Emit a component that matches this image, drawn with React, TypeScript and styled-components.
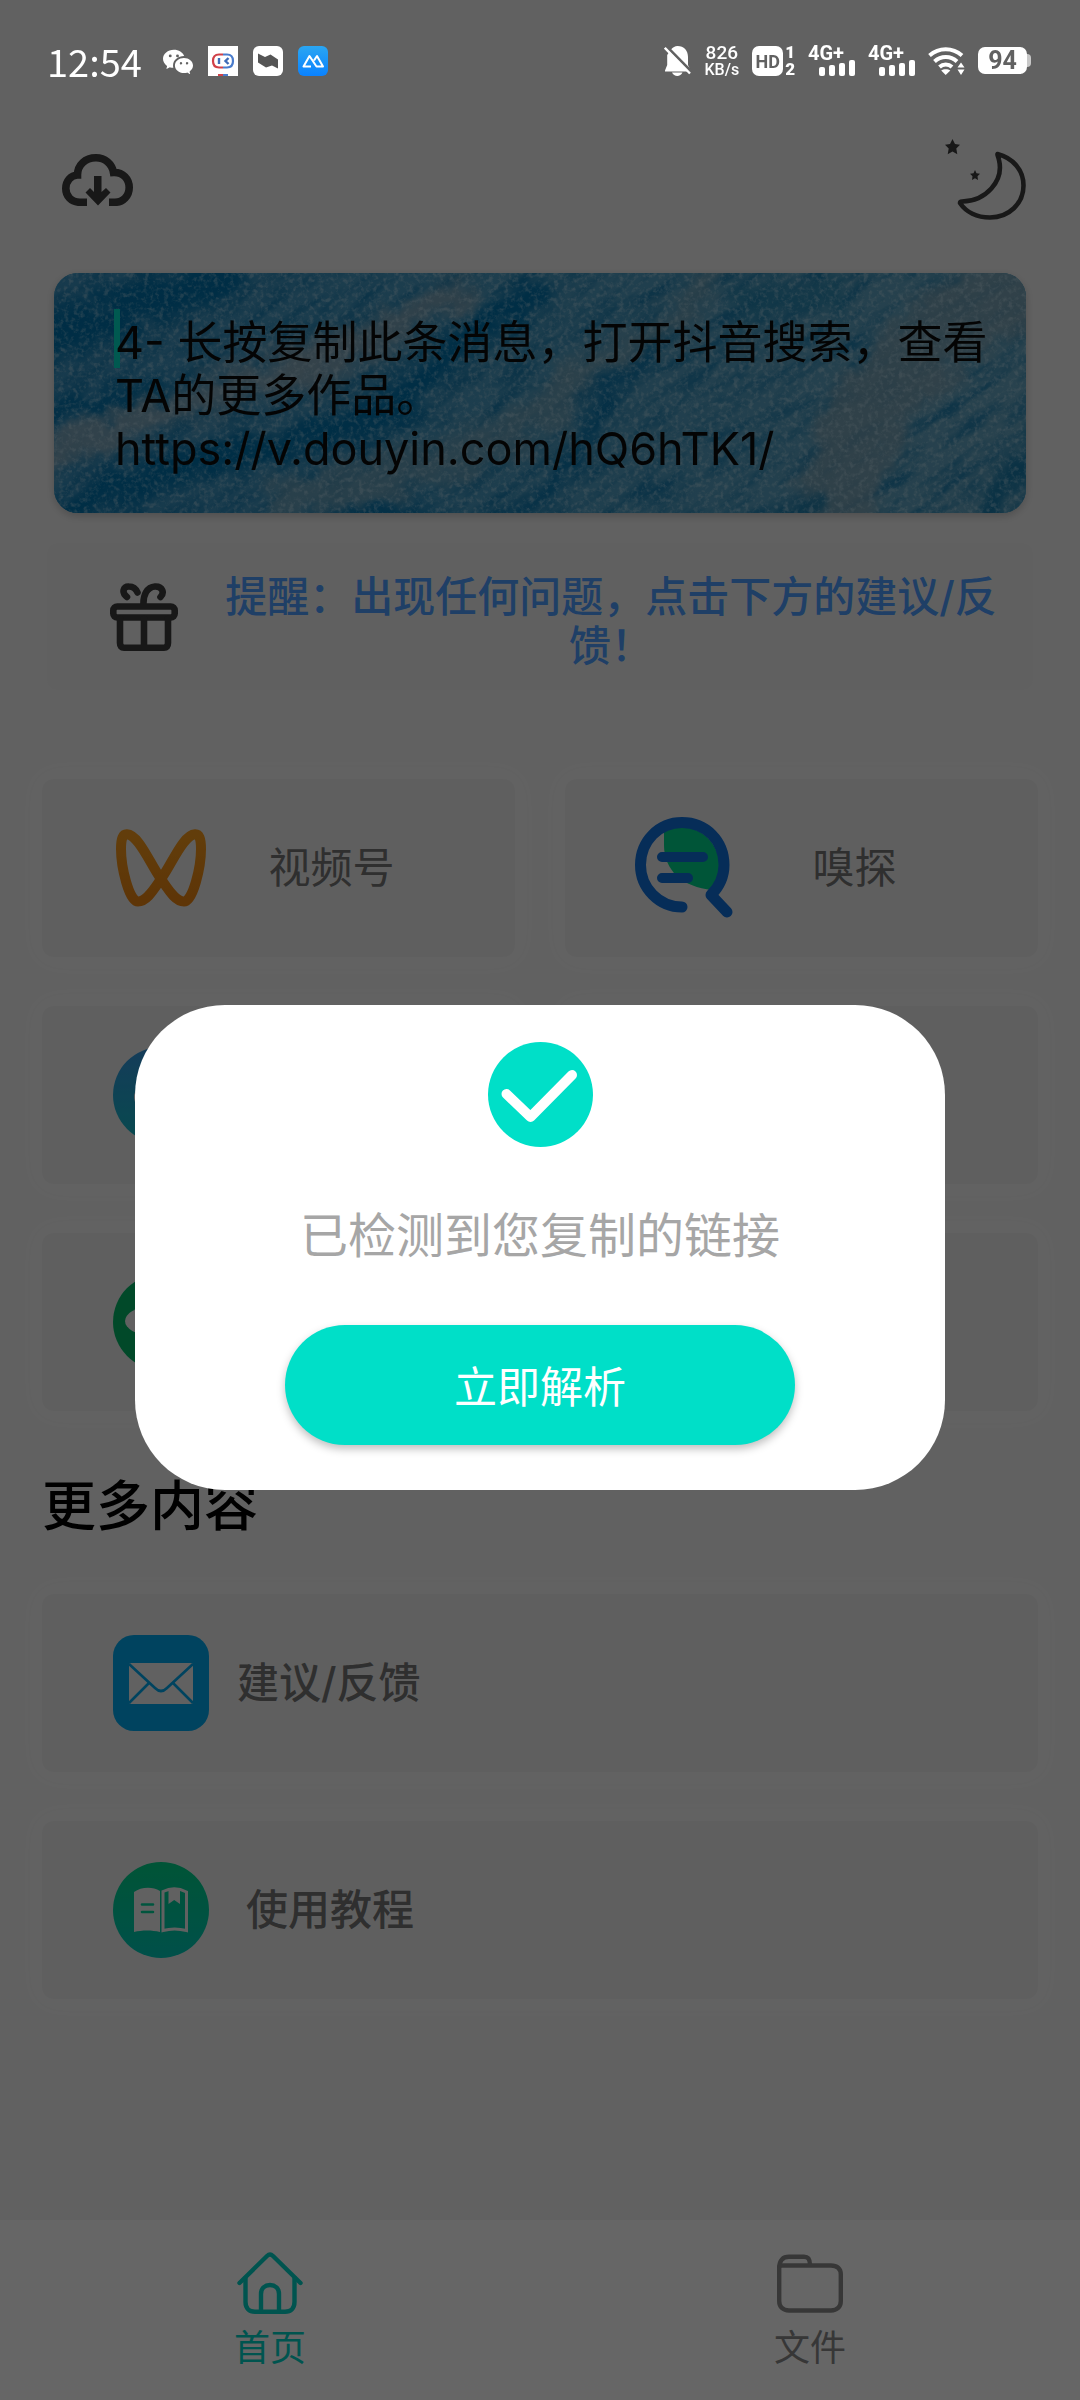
import React, { useState } from "react";
import styled, { createGlobalStyle } from "styled-components";
import { BsWechat } from "react-icons/bs";

const GlobalStyle = createGlobalStyle`
  *, *::before, *::after { box-sizing: border-box; }
  body {
    margin: 0;
    background: #f3f3f3;
    font-family: "Inter", "Noto Sans CJK SC", sans-serif;
  }
  button, textarea { font: inherit; color: inherit; }
  svg { display: block; flex: none; }
`;

const Screen = styled.div`
  display: flex;
  flex-direction: column;
  min-height: 100vh;
`;

/* ---------- status bar ---------- */

const StatusBar = styled.header`
  position: relative;
  z-index: 2;
  display: flex;
  align-items: center;
  justify-content: space-between;
  height: 94px;
  padding: 27px 49px 0 47px;
  color: #fff;
  font-family: "Roboto", sans-serif;
`;

const StatusGroup = styled.div<{ $gap: number }>`
  display: flex;
  align-items: center;
  gap: ${(p) => p.$gap}px;
`;

const Clock = styled.time`
  margin-right: 6px;
  font-family: "Noto Sans CJK SC", sans-serif;
  font-size: 38px;
  line-height: 40px;
`;

const Stack = styled.div`
  display: flex;
  flex-direction: column;
  align-items: center;
  font-weight: 500;
  line-height: 17px;
`;

const Small = styled.span<{ $size: number }>`
  font-size: ${(p) => p.$size}px;
`;

const HdGroup = styled.div`
  display: flex;
  align-items: center;
  gap: 2px;
  font-weight: 700;
`;

const HdBadge = styled.span`
  width: 31px;
  height: 30px;
  border-radius: 7px;
  background: #fff;
  color: #616161;
  font-size: 18px;
  line-height: 31px;
  text-align: center;
`;

const SimNumbers = styled(Stack)`
  font-size: 17px;
  font-weight: 900;
`;

const SignalBox = styled.div`
  display: flex;
  flex-direction: column;
  width: 47px;
  height: 30px;
`;

const SignalType = styled.span`
  height: 14px;
  font-size: 20px;
  font-weight: 700;
  line-height: 14px;
  white-space: nowrap;
`;

const SignalBars = styled.div`
  display: flex;
  align-items: flex-end;
  justify-content: flex-end;
  gap: 4px;
  height: 16px;
`;

const SignalBar = styled.i<{ $height: number }>`
  width: 6px;
  height: ${(p) => p.$height}px;
  border-radius: 2px;
  background: #fff;
`;

const Battery = styled.div`
  display: flex;
  align-items: center;
`;

const BatteryBody = styled.span`
  width: 49px;
  height: 27px;
  border-radius: 7px;
  background: #fff;
  color: #616161;
  font-size: 25px;
  font-weight: 700;
  line-height: 28px;
  text-align: center;
`;

const BatteryTip = styled.i`
  width: 4px;
  height: 13px;
  border-radius: 0 4px 4px 0;
  background: #c8c8c8;
`;

/* ---------- page ---------- */

const Toolbar = styled.div`
  display: flex;
  align-items: center;
  justify-content: space-between;
  padding: 45px 54px 53px 62px;
  color: #3c3c3c;
`;

const IconButton = styled.button`
  padding: 0;
  border: 0;
  background: none;
`;

const LinkCard = styled.section`
  position: relative;
  margin: 0 54px;
  overflow: hidden;
  border-radius: 24px;
  background: #3fa3cf;
  box-shadow: 0 3px 8px rgba(0, 0, 0, 0.2);
`;

const WaterArt = styled.svg`
  position: absolute;
  inset: 0;
  width: 100%;
  height: 100%;
`;

const LinkInput = styled.textarea`
  position: relative;
  display: block;
  width: 100%;
  height: 240px;
  padding: 43px 30px 38px 61px;
  overflow: hidden;
  border: 0;
  outline: 0;
  resize: none;
  background: none;
  color: #0c0c0c;
  font-size: 45px;
  line-height: 53px;
`;

const Caret = styled.i`
  position: absolute;
  left: 60px;
  top: 36px;
  width: 6px;
  height: 59px;
  background: #00dfc8;
`;

const Notice = styled.section`
  display: flex;
  align-items: center;
  gap: 40px;
  margin: 30px 47px 89px;
  min-height: 147px;
  padding: 0 29px 0 63px;
  border-radius: 10px;
  background: #f1f1f1;
  color: #3c3c3c;
`;

const NoticeText = styled.p`
  flex: 1;
  margin: 0;
  padding-top: 8px;
  color: #4f9eff;
  font-size: 42px;
  font-weight: 500;
  line-height: 49px;
  text-align: center;
`;

const CardGrid = styled.div<{ $columns: number }>`
  display: grid;
  grid-template-columns: repeat(${(p) => p.$columns}, 1fr);
  gap: 49px 50px;
  padding: 0 42px;
`;

const Card = styled.button`
  display: flex;
  align-items: center;
  height: 178px;
  padding: 0 66px;
  border: 0;
  border-radius: 12px;
  background: #eeeeee;
  box-shadow: 0 0 24px #f8f8f8;
  color: #757575;
  font-size: 42px;
  line-height: 56px;
`;

const CardIcon = styled.span`
  display: flex;
  flex: none;
  justify-content: center;
  width: 106px;
`;

const CardLabel = styled.span`
  flex: 1;
  text-align: center;
`;

const RowLabel = styled.span<{ $gap: number }>`
  padding-left: ${(p) => p.$gap}px;
  font-weight: 500;
`;

const SectionTitle = styled.h2`
  margin: 64px 42px 55px;
  color: #000;
  font-size: 54px;
  font-weight: 500;
  line-height: 64px;
`;

const TabBar = styled.nav`
  display: grid;
  grid-template-columns: 1fr 1fr;
  height: 180px;
  margin-top: auto;
  background: #fff;
`;

const Tab = styled.button<{ $active?: boolean }>`
  display: flex;
  flex-direction: column;
  align-items: center;
  gap: 10px;
  padding: 32px 0 0;
  border: 0;
  background: none;
  color: ${(p) => (p.$active ? "#00d2c6" : "#8a8a8a")};
  font-size: 36px;
  line-height: 48px;
`;

/* ---------- dialog ---------- */

const Scrim = styled.div`
  position: fixed;
  inset: 0;
  z-index: 1;
  display: flex;
  align-items: center;
  justify-content: center;
  padding-top: 94px;
  background: rgba(0, 0, 0, 0.6);
`;

const Dialog = styled.div`
  display: flex;
  flex-direction: column;
  align-items: center;
  width: 75%;
  padding: 37px 0 45px;
  border-radius: 90px;
  background: #fff;
`;

const DialogText = styled.p`
  margin: 61px 0;
  color: #a6a6a6;
  font-size: 48px;
  line-height: 56px;
`;

const PrimaryButton = styled.button`
  width: 510px;
  max-width: 90%;
  height: 120px;
  padding: 4px 0 0;
  border: 0;
  border-radius: 60px;
  background: #00dfc8;
  box-shadow: 0 4px 8px rgba(0, 0, 0, 0.25);
  color: #fff;
  font-size: 43px;
  line-height: 56px;
`;

/* ---------- drawings ---------- */

const Water = () => (
  <WaterArt viewBox="0 0 972 240" preserveAspectRatio="none" aria-hidden="true">
    <defs>
      <linearGradient id="sea" x1="0" y1="0" x2="1" y2="0">
        <stop offset="0" stopColor="#3b92c0" />
        <stop offset="0.5" stopColor="#4c9cc2" />
        <stop offset="1" stopColor="#66a6c2" />
      </linearGradient>
      <filter id="swirl" x="-10%" y="-20%" width="120%" height="140%" colorInterpolationFilters="sRGB">
        <feGaussianBlur stdDeviation="8" result="soft" />
        <feTurbulence type="fractalNoise" baseFrequency="0.03" numOctaves="4" seed="8" result="warp" />
        <feDisplacementMap in="soft" in2="warp" scale="40" xChannelSelector="R" yChannelSelector="G" />
      </filter>
      <filter id="foam" x="0" y="0" width="100%" height="100%" colorInterpolationFilters="sRGB">
        <feTurbulence type="fractalNoise" baseFrequency="0.2" numOctaves="3" seed="4" />
        <feColorMatrix values="0 0 0 0 0.8  0 0 0 0 0.9  0 0 0 0 0.95  3 1.4 0 0 -2.1" />
      </filter>
      <filter id="depth" x="0" y="0" width="100%" height="100%" colorInterpolationFilters="sRGB">
        <feTurbulence type="fractalNoise" baseFrequency="0.02 0.08" numOctaves="5" seed="21" />
        <feColorMatrix values="0 0 0 0 0  0 0 0 0 0.43  0 0 0 0 0.65  0 2.4 1 0 -1.5" />
      </filter>
    </defs>
    <rect width="972" height="240" fill="url(#sea)" />
    <g transform="rotate(-35 486 120)">
      <rect x="-100" y="-300" width="1172" height="840" filter="url(#depth)" opacity="0.6" />
    </g>
    <g filter="url(#swirl)" fill="none" strokeLinecap="round">
      <path d="M-20 190 C90 140 180 120 290 70" stroke="#93aebc" strokeWidth="30" opacity="0.8" />
      <path d="M240 110 C300 80 340 50 400 20" stroke="#8aa8b8" strokeWidth="34" opacity="0.8" />
      <path d="M230 230 C330 200 440 190 510 120" stroke="#7fa6b8" strokeWidth="40" opacity="0.6" />
      <path d="M660 0 C620 60 560 80 520 100" stroke="#86a8b6" strokeWidth="26" opacity="0.6" />
      <path d="M960 20 C860 60 800 140 780 230" stroke="#84a4b2" strokeWidth="80" opacity="0.7" />
      <path d="M-20 70 C40 50 90 30 170 0" stroke="#0072ac" strokeWidth="44" />
      <path d="M-20 150 C30 130 60 125 110 115" stroke="#0072ac" strokeWidth="20" />
      <path d="M10 240 C120 180 250 175 330 140 C390 105 390 60 480 25" stroke="#0072ac" strokeWidth="32" />
      <path d="M455 250 C540 200 525 130 600 75" stroke="#0070aa" strokeWidth="16" />
      <path d="M270 250 C310 238 350 238 380 250" stroke="#0072ac" strokeWidth="20" />
      <path d="M690 30 L780 20" stroke="#1a80ac" strokeWidth="30" opacity="0.7" />
      <path d="M930 250 C950 215 965 195 995 165" stroke="#1478a8" strokeWidth="24" />
      <path d="M730 250 L770 228" stroke="#1478a8" strokeWidth="18" />
    </g>
    <rect width="972" height="240" filter="url(#foam)" opacity="0.4" />
  </WaterArt>
);

const RobotAppIcon = () => (
  <svg width="30" height="30" viewBox="0 0 30 30">
    <rect width="30" height="30" fill="#fff" />
    <path d="M15 8.5 H11 C7 8.5 5 11 5 15 C5 19.500 7 21.500 11 21.500 H15" fill="none" stroke="#d04048" strokeWidth="2.200" />
    <path d="M15 8.500 H19 C23 8.500 25 11 25 15 C25 19.500 23 21.500 19 21.500 H15" fill="none" stroke="#4a7ccc" strokeWidth="2.200" />
    <path d="M11 12 V18" stroke="#3f6cb8" strokeWidth="2.400" />
    <path d="M20.500 12 L17.500 15 L20.500 18" fill="none" stroke="#3f6cb8" strokeWidth="2.400" />
    <path d="M10 29 H15" stroke="#d04048" strokeWidth="2" />
    <path d="M15 29 H20" stroke="#4a7ccc" strokeWidth="2" />
  </svg>
);

const RibbonAppIcon = () => (
  <svg width="30" height="30" viewBox="0 0 30 30">
    <rect width="30" height="30" rx="6" fill="#fff" />
    <path d="M5 7.500 L12 11 L17.500 8.500 L25 13.500 V22.500 L19 19.500 L13 21.500 L5 16.500 Z" fill="#555" />
  </svg>
);

const PeaksAppIcon = () => (
  <svg width="30" height="30" viewBox="0 0 30 30">
    <defs>
      <linearGradient id="peaks" x1="0" y1="0" x2="0" y2="1">
        <stop offset="0" stopColor="#2aa6f2" />
        <stop offset="1" stopColor="#0a82ff" />
      </linearGradient>
    </defs>
    <rect width="30" height="30" rx="6" fill="url(#peaks)" />
    <path d="M13 20.500 H5.500 L11.500 10 L18.500 20.500 H25 L19 10 L16 14.500" fill="none" stroke="#fff" strokeWidth="2" strokeLinejoin="round" />
  </svg>
);

const BellOff = () => (
  <svg width="27" height="30" viewBox="0 0 27 30">
    <path d="M7 3.500 C9 1.200 11 0 13.500 0 C20 0 24 4.500 24 11 V19 L26.500 24.500 V25.500 H1 V24.500 L3.200 19 V9 Z" fill="#fff" />
    <path d="M8 26.500 H18.500 C17.500 28.800 15.500 30 13.300 30 C11 30 9 28.800 8 26.500 Z" fill="#fff" />
    <path d="M2.500 0.500 L27 25.500" stroke="#616161" strokeWidth="3" />
    <path d="M0.800 1.800 L26 27.500" stroke="#fff" strokeWidth="2.400" />
  </svg>
);

const Wifi = () => (
  <svg width="37" height="28" viewBox="0 0 37 28">
    <g fill="none" stroke="#fff" strokeWidth="4">
      <path d="M1.500 8.500 C11 0.200 24.500 0.200 34 8.500" />
      <path d="M6.500 14.500 C13 8.600 22.500 8.600 29 14.500" />
      <path d="M11.500 20 C15 16.800 20.500 16.800 24 20" />
    </g>
    <path d="M13.200 23.500 C15.500 21.800 20 21.800 22.300 23.500 L17.700 28 Z" fill="#fff" />
    <path d="M33 15.500 L36.500 20.500 H29.500 Z M33 28 L36.500 22.500 H29.500 Z" fill="#fff" />
  </svg>
);

const CloudDownload = () => (
  <svg width="71" height="52" viewBox="0 0 71 52">
    <path
      d="M25 48.300 H18 C9 48.300 3.800 42 3.800 34.500 C3.800 27 9 21.300 15.500 21 C15.500 11 23 3.800 34 3.800 C43 3.800 50 10 51.500 18.500 C61 18 67.200 25 67.200 33.500 C67.200 42 61 48.300 53 48.300 H47"
      fill="none"
      stroke="currentColor"
      strokeWidth="7.600"
    />
    <path d="M32 22 H39.500 V38 L44 34 L48.500 38.500 L36 51.500 L23.500 38.500 L28 34 L32 38 Z" fill="currentColor" />
  </svg>
);

const MoonStars = () => (
  <svg width="81" height="81" viewBox="0 0 81 81">
    <path
      d="M52.500 15 C68 19 78.500 31 78.500 46.500 C78.500 64.500 64 78.500 45 78.500 C32 78.500 21 73 15 64 C15 63 15.500 62.500 17 62.500 C41 62 59 42 54 21 C53.500 18 52 16 52.500 15 Z"
      fill="none"
      stroke="currentColor"
      strokeWidth="4.600"
      strokeLinejoin="round"
    />
    <path d="M7.500 0 L10 5 L15 5.700 L11.300 9.500 L12.300 15.200 L7.500 12.500 L2.700 15.200 L3.700 9.500 L0 5.700 L5 5 Z" fill="currentColor" />
    <path d="M30 31 L31.500 34.200 L35 34.700 L32.500 37.200 L33 41 L30 39.200 L27 41 L27.500 37.200 L25 34.700 L28.500 34.200 Z" fill="currentColor" />
  </svg>
);

const Gift = () => (
  <svg width="68" height="68" viewBox="0 0 68 68">
    <g fill="none" stroke="currentColor" strokeWidth="6.600" strokeLinecap="round" strokeLinejoin="round">
      <path d="M17 14 C11 9 13.500 3.300 19 3.500 C23 3.500 26 6 27.500 9.500" />
      <path d="M33.500 22 C33 12 37 4 45 3.500 C53 3.200 54.500 10 50.500 14" />
      <rect x="3.300" y="23.500" width="61.400" height="11" rx="4" />
      <path d="M10 36 V60 C10 63 11.500 64.700 14 64.700 H54 C56.500 64.700 58 63 58 60 V36 M34 36 V64" />
    </g>
  </svg>
);

const Butterfly = () => (
  <svg width="90" height="78" viewBox="0 0 90 78">
    <defs>
      <linearGradient id="wing" x1="0" y1="0" x2="0" y2="1">
        <stop offset="0" stopColor="#f59a1c" />
        <stop offset="1" stopColor="#ea8412" />
      </linearGradient>
    </defs>
    <path
      d="M11 5.300 C23 6 34 35 45 50 C52 60 59 72.500 68 72.500 C77 72.500 85 38 85 20 C85 9 83 5 79 5.300 C67 6 56 35 45 50 C38 60 31 72.500 22 72.500 C13 72.500 5 38 5 20 C5 9 7 5 11 5.300 Z"
      fill="none"
      stroke="url(#wing)"
      strokeWidth="10"
    />
  </svg>
);

const SniffSearch = () => (
  <svg width="99" height="102" viewBox="0 0 99 102">
    <path d="M29 13 C50 4 78 14 84 42 C86 54 82 66 77 73 C48 70 29 54 29 28 Z" fill="#00d48c" />
    <g fill="none" stroke="#1070dc" strokeWidth="11" strokeLinecap="round">
      <path d="M47 90 C24 90 5.500 71 5.500 48 C5.500 24 24 5.500 47 5.500 C71 5.500 89 24 89 48 C89 60 84 70 76 78 L92 95" strokeLinejoin="round" />
      <path d="M27 40 H68 M27 61 H53" strokeWidth="10" />
    </g>
  </svg>
);

const BlueChannel = () => (
  <svg width="96" height="96" viewBox="0 0 96 96">
    <defs>
      <linearGradient id="channel" x1="0" y1="0" x2="0" y2="1">
        <stop offset="0" stopColor="#3496e0" />
        <stop offset="1" stopColor="#14b8c4" />
      </linearGradient>
    </defs>
    <circle cx="48" cy="48" r="48" fill="url(#channel)" />
    <rect x="21" y="38" width="54" height="24" rx="12" fill="#f3f3f3" />
  </svg>
);

const GreenChat = () => (
  <svg width="96" height="96" viewBox="0 0 96 96">
    <circle cx="48" cy="48" r="48" fill="#04b768" />
    <ellipse cx="37" cy="47" rx="25" ry="14" fill="#f3f3f3" />
  </svg>
);

const MailTile = () => (
  <svg width="96" height="96" viewBox="0 0 96 96">
    <rect width="96" height="96" rx="21" fill="#00a8ee" />
    <rect x="16" y="28" width="64" height="41" rx="2" fill="#f3f3f3" />
    <path d="M16 29 L42 53 C46 57 50 57 54 53 L80 29 M36 48 L16 68 M60 48 L80 68" fill="none" stroke="#00a8ee" strokeWidth="2.600" />
  </svg>
);

const BookBadge = () => (
  <svg width="96" height="96" viewBox="0 0 96 96">
    <defs>
      <linearGradient id="book" x1="0" y1="0" x2="0" y2="1">
        <stop offset="0" stopColor="#00d288" />
        <stop offset="1" stopColor="#00c8b8" />
      </linearGradient>
    </defs>
    <circle cx="48" cy="48" r="48" fill="url(#book)" />
    <path d="M21 30 C28 25 39 24 47 29 V70 C39 68 29 68 21 70 Z" fill="#f3f3f3" />
    <path d="M50 29.500 C57 26 66 26 73.500 30 V68.500 C66 66.500 57 66.500 50 68.500 Z" fill="none" stroke="#f3f3f3" strokeWidth="3" />
    <path d="M55.500 27 H67 V42 L61.200 38 L55.500 42 Z" fill="#f3f3f3" />
    <path d="M29 42.500 H40 M29 50 H40" stroke="#00d49c" strokeWidth="2.600" strokeLinecap="round" />
  </svg>
);

const HomeIcon = () => (
  <svg width="66" height="62" viewBox="0 0 66 62">
    <g fill="none" stroke="currentColor" strokeWidth="4.400" strokeLinecap="round" strokeLinejoin="round">
      <path d="M2.500 31 L30 4 C32 2 34 2 36 4 L63.500 31" />
      <path d="M8.500 26 V50 C8.500 56 12 59.800 18 59.800 H48 C54 59.800 57.500 56 57.500 50 V26" />
      <path d="M24 59 V42 C24 36 28 33 33 33 C38 33 42 36 42 42 V59" />
    </g>
  </svg>
);

const FolderIcon = () => (
  <svg width="66" height="62" viewBox="0 0 66 62">
    <g fill="none" stroke="currentColor" strokeWidth="4.400">
      <path d="M2.200 13.500 V49 C2.200 55 6 58.500 12 58.500 H54 C60 58.500 63.800 55 63.800 49 V22.500 C63.800 16.500 60 13.500 54 13.500 H4" />
      <path d="M2.200 16 C2.200 8 6 4.800 12 4.800 H27 C31 4.800 33 7 33 13" />
    </g>
  </svg>
);

const CheckBadge = () => (
  <svg width="105" height="105" viewBox="0 0 105 105">
    <circle cx="52.500" cy="52.500" r="52.500" fill="#00dfc8" />
    <path d="M18.500 52 L42.500 75 L84 33" fill="none" stroke="#fff" strokeWidth="10" strokeLinecap="round" strokeLinejoin="round" />
  </svg>
);

/* ---------- composition ---------- */

const BAR_HEIGHTS = [9, 11, 13, 16];

const Signal = () => (
  <SignalBox>
    <SignalType>4G+</SignalType>
    <SignalBars>
      {BAR_HEIGHTS.map((h) => (
        <SignalBar key={h} $height={h} />
      ))}
    </SignalBars>
  </SignalBox>
);

const FEATURES = [
  { icon: <Butterfly />, label: "视频号" },
  { icon: <SniffSearch />, label: "嗅探" },
  { icon: <BlueChannel />, label: "" },
  { icon: null, label: "" },
  { icon: <GreenChat />, label: "" },
  { icon: null, label: "" },
];

const MORE = [
  { icon: <MailTile />, label: "建议/反馈", gap: 23 },
  { icon: <BookBadge />, label: "使用教程", gap: 32 },
];

export default function App() {
  const [link, setLink] = useState(
    "4- 长按复制此条消息，打开抖音搜索，查看TA的更多作品。\nhttps://v.douyin.com/hQ6hTK1/"
  );

  return (
    <Screen>
      <GlobalStyle />
      <StatusBar>
        <StatusGroup $gap={15}>
          <Clock>12:54</Clock>
          <BsWechat size={30} />
          <RobotAppIcon />
          <RibbonAppIcon />
          <PeaksAppIcon />
        </StatusGroup>
        <StatusGroup $gap={13}>
          <BellOff />
          <Stack>
            <Small $size={19}>826</Small>
            <Small $size={16}>KB/s</Small>
          </Stack>
          <HdGroup>
            <HdBadge>HD</HdBadge>
            <SimNumbers>
              <span>1</span>
              <span>2</span>
            </SimNumbers>
          </HdGroup>
          <Signal />
          <Signal />
          <Wifi />
          <Battery>
            <BatteryBody>94</BatteryBody>
            <BatteryTip />
          </Battery>
        </StatusGroup>
      </StatusBar>

      <Toolbar>
        <IconButton type="button" aria-label="下载">
          <CloudDownload />
        </IconButton>
        <IconButton type="button" aria-label="夜间模式">
          <MoonStars />
        </IconButton>
      </Toolbar>

      <LinkCard>
        <Water />
        <Caret />
        <LinkInput
          aria-label="链接"
          spellCheck={false}
          value={link}
          onChange={(e) => setLink(e.target.value)}
        />
      </LinkCard>

      <Notice>
        <Gift />
        <NoticeText>提醒：出现任何问题，点击下方的建议/反馈！</NoticeText>
      </Notice>

      <CardGrid $columns={2}>
        {FEATURES.map((f, i) => (
          <Card type="button" key={i}>
            <CardIcon>{f.icon}</CardIcon>
            <CardLabel>{f.label}</CardLabel>
          </Card>
        ))}
      </CardGrid>

      <SectionTitle>更多内容</SectionTitle>

      <CardGrid $columns={1}>
        {MORE.map((m) => (
          <Card type="button" key={m.label}>
            <CardIcon>{m.icon}</CardIcon>
            <RowLabel $gap={m.gap}>{m.label}</RowLabel>
          </Card>
        ))}
      </CardGrid>

      <TabBar>
        <Tab type="button" $active>
          <HomeIcon />
          首页
        </Tab>
        <Tab type="button">
          <FolderIcon />
          文件
        </Tab>
      </TabBar>

      <Scrim>
        <Dialog role="dialog" aria-modal="true">
          <CheckBadge />
          <DialogText>已检测到您复制的链接</DialogText>
          <PrimaryButton type="button">立即解析</PrimaryButton>
        </Dialog>
      </Scrim>
    </Screen>
  );
}
